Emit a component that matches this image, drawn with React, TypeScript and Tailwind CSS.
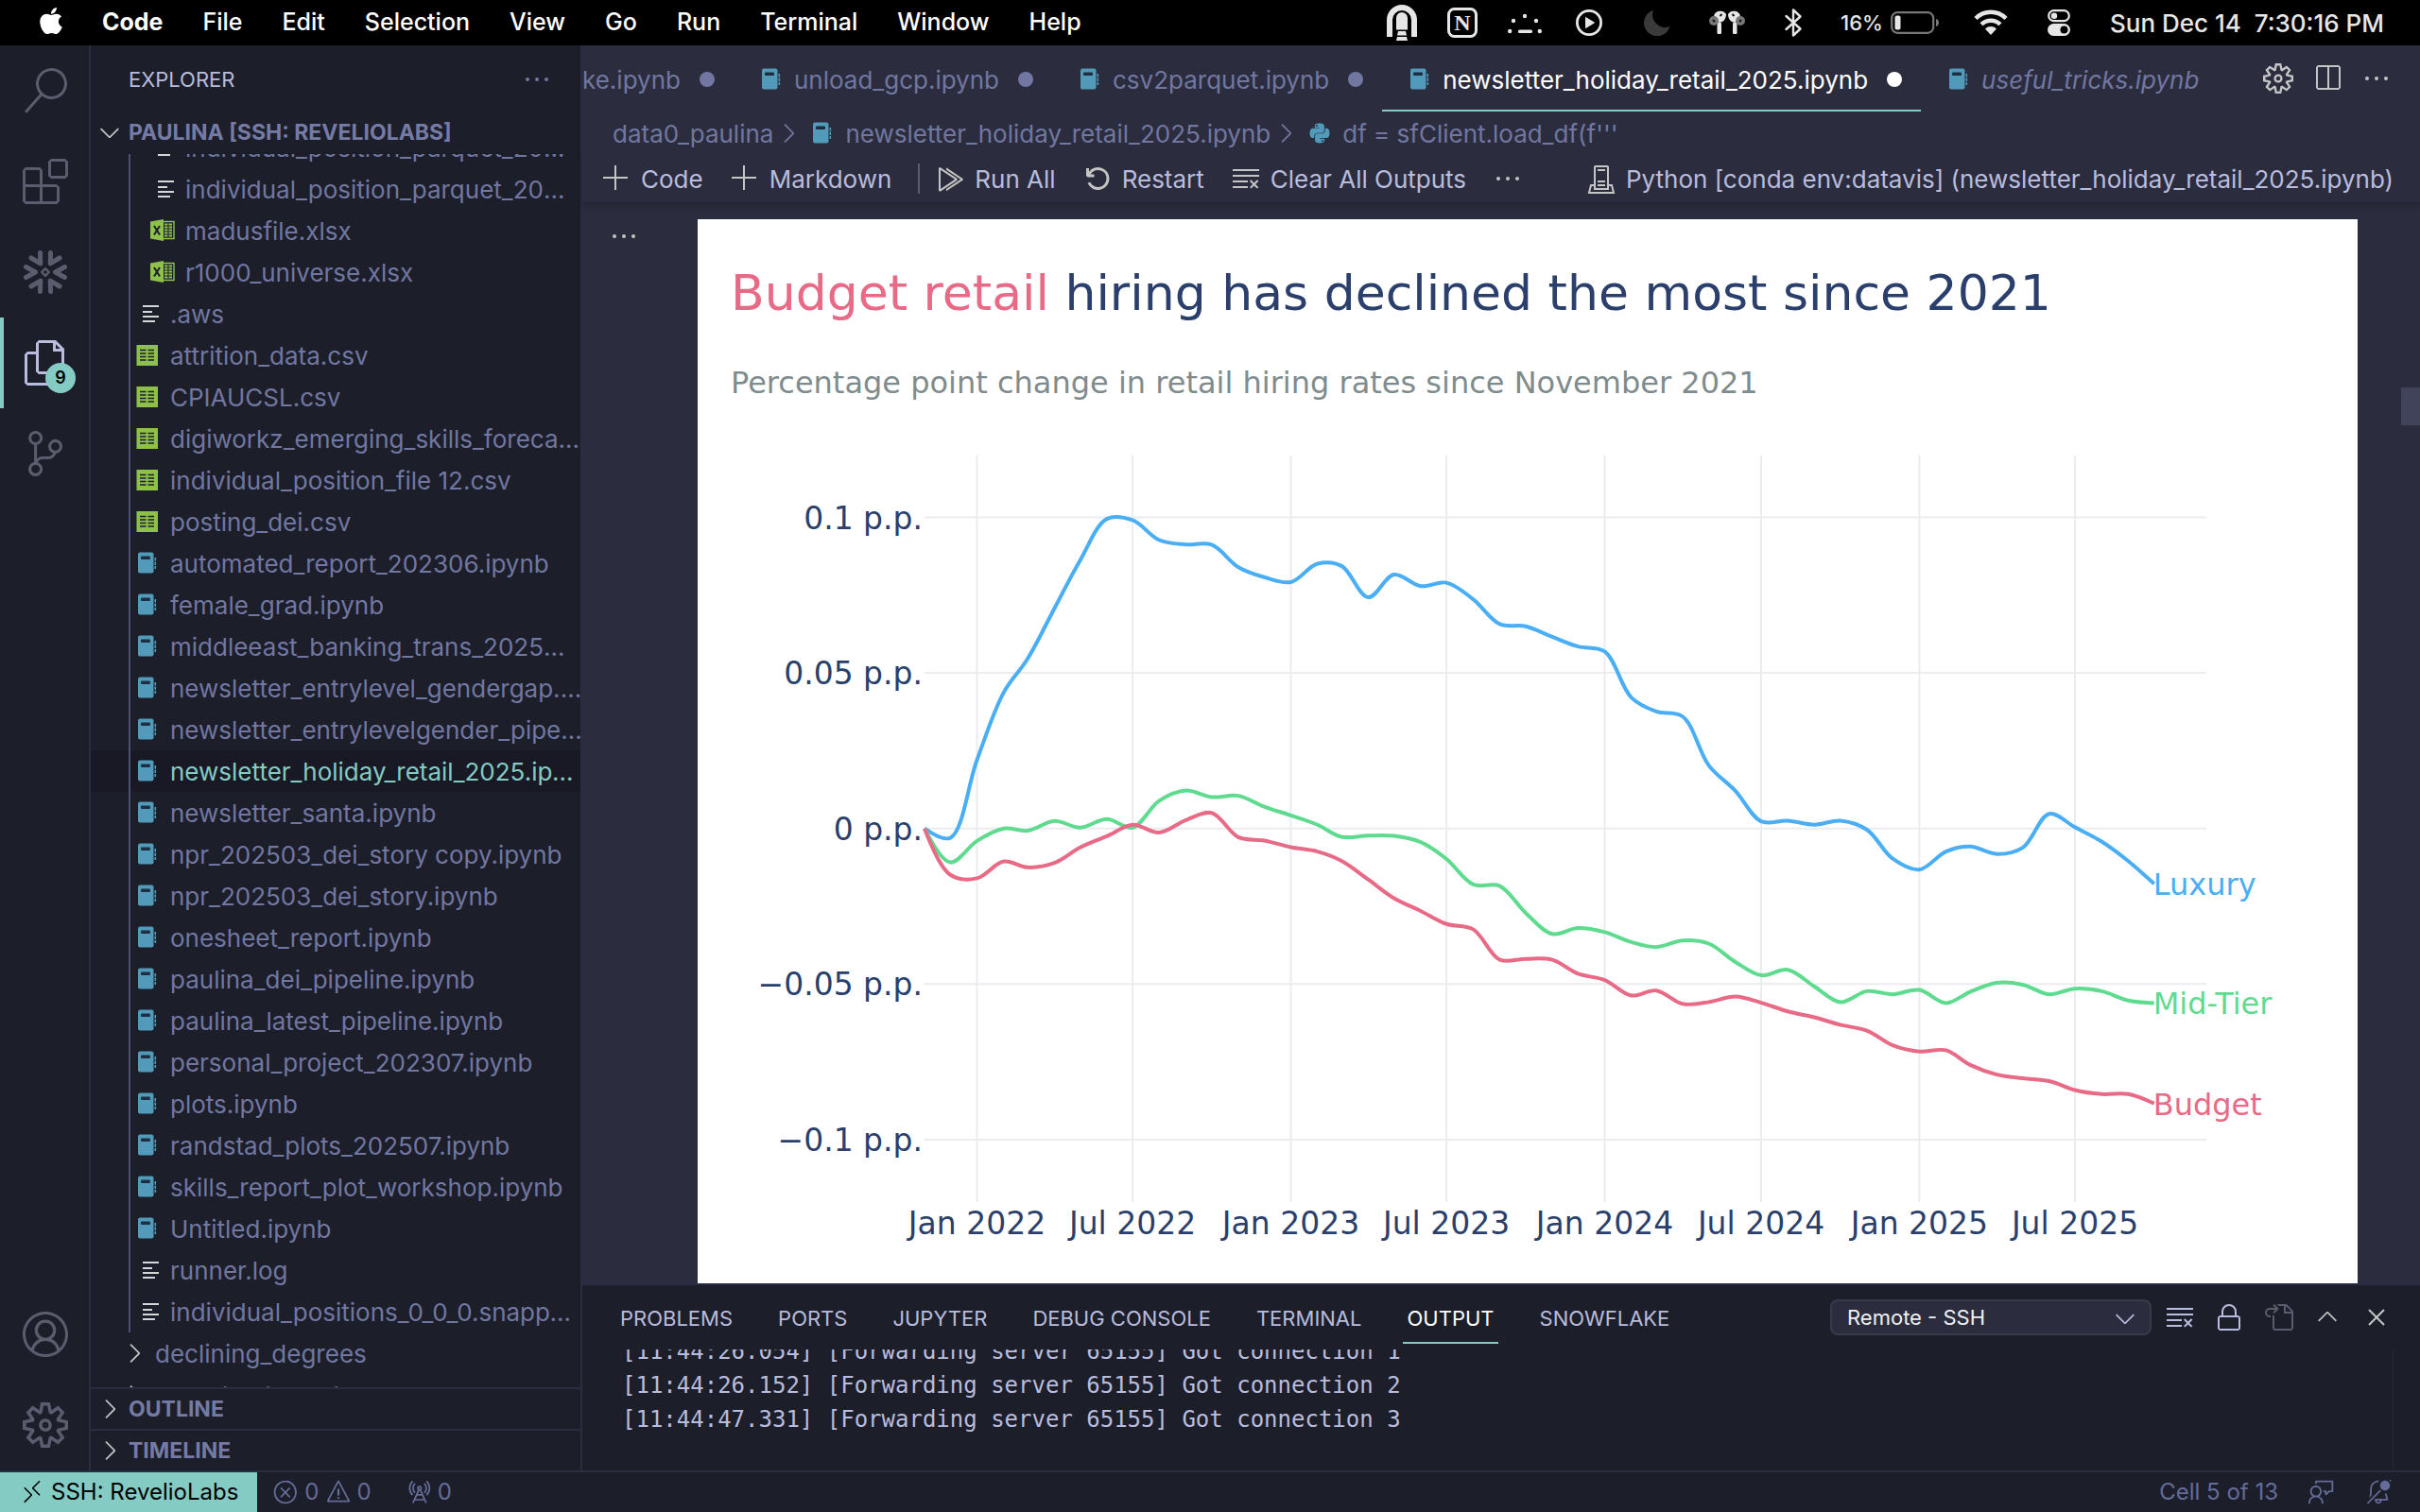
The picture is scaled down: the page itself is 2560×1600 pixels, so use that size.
import { Fragment, useState } from "react";
import type { ReactNode } from "react";
import { FaApple, FaPython } from "react-icons/fa";
import {
  VscAccount,
  VscAdd,
  VscBellSlashDot,
  VscChevronDown,
  VscChevronRight,
  VscChevronUp,
  VscClearAll,
  VscClose,
  VscDebugRestart,
  VscEllipsis,
  VscError,
  VscExtensions,
  VscFeedback,
  VscFiles,
  VscGoToFile,
  VscLock,
  VscRadioTower,
  VscRemote,
  VscRunAll,
  VscSearch,
  VscServerEnvironment,
  VscSettingsGear,
  VscSourceControl,
  VscSplitHorizontal,
  VscWarning,
} from "react-icons/vsc";

type FileKind = "text" | "excel" | "csv" | "notebook";

interface FileEntry {
  name: string;
  kind: FileKind;
  nested?: boolean;
}

const files: FileEntry[] = [
  { name: "individual_position_parquet_20m_a.parquet", kind: "text", nested: true },
  { name: "individual_position_parquet_20m_b.parquet", kind: "text", nested: true },
  { name: "madusfile.xlsx", kind: "excel", nested: true },
  { name: "r1000_universe.xlsx", kind: "excel", nested: true },
  { name: ".aws", kind: "text" },
  { name: "attrition_data.csv", kind: "csv" },
  { name: "CPIAUCSL.csv", kind: "csv" },
  { name: "digiworkz_emerging_skills_forecast.csv", kind: "csv" },
  { name: "individual_position_file 12.csv", kind: "csv" },
  { name: "posting_dei.csv", kind: "csv" },
  { name: "automated_report_202306.ipynb", kind: "notebook" },
  { name: "female_grad.ipynb", kind: "notebook" },
  { name: "middleeast_banking_trans_2025mar.ipynb", kind: "notebook" },
  { name: "newsletter_entrylevel_gendergap.ipynb", kind: "notebook" },
  { name: "newsletter_entrylevelgender_pipeline.ipynb", kind: "notebook" },
  { name: "newsletter_holiday_retail_2025.ipynb", kind: "notebook" },
  { name: "newsletter_santa.ipynb", kind: "notebook" },
  { name: "npr_202503_dei_story copy.ipynb", kind: "notebook" },
  { name: "npr_202503_dei_story.ipynb", kind: "notebook" },
  { name: "onesheet_report.ipynb", kind: "notebook" },
  { name: "paulina_dei_pipeline.ipynb", kind: "notebook" },
  { name: "paulina_latest_pipeline.ipynb", kind: "notebook" },
  { name: "personal_project_202307.ipynb", kind: "notebook" },
  { name: "plots.ipynb", kind: "notebook" },
  { name: "randstad_plots_202507.ipynb", kind: "notebook" },
  { name: "skills_report_plot_workshop.ipynb", kind: "notebook" },
  { name: "Untitled.ipynb", kind: "notebook" },
  { name: "runner.log", kind: "text" },
  { name: "individual_positions_0_0_0.snappy.parquet", kind: "text" },
];

const activeFile = "newsletter_holiday_retail_2025.ipynb";

const FileIcon = ({ kind }: { kind: FileKind }) => {
  if (kind === "text") {
    return (
      <svg className="h-10 w-10 shrink-0" viewBox="0 0 40 40" fill="#d4d7d6">
        <rect x="15" y="11" width="17" height="2" />
        <rect x="15" y="17" width="10" height="2" />
        <rect x="15" y="22" width="17" height="2" />
        <rect x="15" y="27" width="13" height="2" />
      </svg>
    );
  }
  if (kind === "excel") {
    return (
      <svg className="h-10 w-10 shrink-0" viewBox="0 0 40 40">
        <path d="M7 10.5 21 8v23L7 28.5z" fill="#8dc149" />
        <path d="M21 10.5h11v18H21" fill="none" stroke="#8dc149" strokeWidth="1.4" />
        <path
          d="M22 13.5h8M22 16.5h8M22 19.5h8M22 22.5h8M22 25.5h8"
          stroke="#8dc149"
          strokeWidth="2"
        />
        <path d="M26 12v15" stroke="#1c1e2a" strokeWidth="1" />
        <path d="m11 15 6 9.5M17 15l-6 9.5" stroke="#1c1e2a" strokeWidth="2" />
      </svg>
    );
  }
  if (kind === "csv") {
    return (
      <svg className="h-10 w-10 shrink-0" viewBox="0 0 40 40">
        <rect x="8.500" y="9" width="22.500" height="22" fill="#8dc149" />
        <path
          d="M12 14.500h6.500M12 18h6.500M12 21.500h6.500M12 25h6.500M20.500 14.500H27M20.500 18H27M20.500 21.500H27M20.500 25H27"
          stroke="#1c1e2a"
          strokeWidth="1.500"
        />
      </svg>
    );
  }
  return (
    <svg className="h-10 w-10 shrink-0" viewBox="0 0 40 40">
      <rect x="10" y="8.500" width="16.500" height="22" rx="2" fill="#519aba" />
      <rect x="13" y="12.500" width="10" height="3.500" rx="1" fill="#1f2f3f" />
      <path d="M28.300 14v3.500M28.300 18.500V22M28.300 23v3" stroke="#519aba" strokeWidth="1.600" />
    </svg>
  );
};

const SnowflakeIcon = () => (
  <svg
    className="h-12 w-12"
    viewBox="0 0 48 48"
    fill="none"
    stroke="currentColor"
    strokeLinecap="round"
    strokeLinejoin="round"
  >
    {[0, 60, 120, 180, 240, 300].map((angle) => (
      <path
        key={angle}
        d="M44.500 18.500 34.500 24l10 5.500"
        strokeWidth="5"
        transform={`rotate(${angle} 24 24)`}
      />
    ))}
    <path d="m24 20.200 3.800 3.800-3.800 3.800-3.800-3.800z" strokeWidth="2.400" />
  </svg>
);

const menus = ["File", "Edit", "Selection", "View", "Go", "Run", "Terminal", "Window", "Help"];

const StatusIcons = () => (
  <div className="flex items-center gap-8 text-[#e6e6e6]">
    <svg className="h-10 w-8" viewBox="0 0 32 40" fill="currentColor">
      <path d="M0 35V17a16 16 0 0 1 32 0v18h-6V17a10 10 0 0 0-20 0v18z" />
      <path d="M10 27.500V15a6 6 0 0 1 12 0v12.500zM12 29h8l1 4.500H11zM11 35h10l1 4H10z" />
    </svg>
    <svg className="h-8 w-8" viewBox="0 0 32 32" fill="none">
      <rect x="1.500" y="1.500" width="29" height="29" rx="6" stroke="currentColor" strokeWidth="3" />
      <text
        x="16"
        y="24"
        textAnchor="middle"
        fill="currentColor"
        className="font-['Liberation_Serif',serif] text-[24px] font-bold"
      >
        N
      </text>
    </svg>
    <svg className="h-10 w-9" viewBox="0 0 36 40" fill="currentColor">
      <circle cx="18" cy="13" r="2.200" />
      <circle cx="6" cy="18" r="2.200" />
      <circle cx="30" cy="18" r="2.200" />
      <circle cx="2.200" cy="29" r="2.200" />
      <circle cx="33.800" cy="29" r="2.200" />
      <rect x="11" y="27.500" width="15" height="3.500" rx="1.500" />
    </svg>
    <svg className="mx-1 h-7 w-7" viewBox="0 0 28 28" fill="none">
      <circle cx="14" cy="14" r="12.600" stroke="currentColor" strokeWidth="2.800" />
      <path d="M10.500 8.500v11l9-5.500z" fill="currentColor" stroke="currentColor" />
    </svg>
    <svg className="mx-2 h-7 w-7 text-[#3a3a3a]" viewBox="0 0 28 28" fill="currentColor">
      <path d="M10 .800A14 14 0 1 0 27.500 18 13.500 13.500 0 0 1 10 .800z" />
    </svg>
    <svg className="mr-1 h-7 w-10" viewBox="0 0 40 28">
      <g fill="#e6e6e6">
        <path d="M6 7a7 6.500 0 0 1 13-2c0 5-3 9-8 9z" />
        <path d="M34 7a7 6.500 0 0 0-13-2c0 5 3 9 8 9z" />
        <rect x="9.500" y="14" width="4.500" height="12" rx="1" />
        <rect x="26" y="14" width="4.500" height="12" rx="1" />
      </g>
      <circle cx="6" cy="12" r="5" fill="#777" />
      <circle cx="34" cy="12" r="5" fill="#777" />
      <path d="m14.500 5-2 2M25.500 5l2 2M5 11l2 2M35 11l-2 2" stroke="#111" strokeWidth="2" />
    </svg>
    <svg
      className="mr-2 ml-1 h-8 w-5"
      viewBox="0 0 20 32"
      fill="none"
      stroke="currentColor"
      strokeWidth="2.400"
      strokeLinejoin="round"
      strokeLinecap="round"
    >
      <path d="m2.500 9 15 13.500L10 29.500v-27l7.500 7L2.500 23" />
    </svg>
    <div className="flex items-center gap-2">
      <span className="text-[22px]">16%</span>
      <svg className="h-6 w-13" viewBox="0 0 52 24" fill="none">
        <rect x="1.200" y="1.200" width="44" height="21.600" rx="6" stroke="#777" strokeWidth="2.200" />
        <rect x="4.500" y="4.500" width="6" height="15" rx="2" fill="#e6e6e6" />
        <path d="M48 8c4 1 4 7 0 8z" fill="#777" />
      </svg>
    </div>
    <svg className="ml-1 h-7 w-9" viewBox="0 0 36 28" fill="none" stroke="currentColor" strokeWidth="4.400">
      <path d="M2 9.500a22.500 22.500 0 0 1 32 0M8 15.800a14.200 14.200 0 0 1 20 0" />
      <path d="m18 27-6-6.500a8.500 8.500 0 0 1 12 0z" fill="currentColor" stroke="none" />
    </svg>
    <svg className="ml-2 h-7 w-7" viewBox="0 0 28 28" fill="none">
      <rect x="3.200" y="1.200" width="21.600" height="11" rx="5.500" stroke="currentColor" strokeWidth="2.200" />
      <circle cx="9" cy="6.700" r="3.200" fill="currentColor" />
      <rect x="2" y="15" width="24" height="13" rx="6.500" fill="currentColor" />
      <circle cx="19.500" cy="21.500" r="4" fill="#000" />
    </svg>
  </div>
);

const MenuBar = () => (
  <header className="flex h-12 shrink-0 items-center bg-black pr-[38px] pl-10 text-[25px] font-medium text-white">
    <FaApple className="mb-1 h-8 w-7" />
    <nav className="ml-10 flex items-center gap-[42px]">
      <button className="font-bold">Code</button>
      {menus.map((menu) => (
        <button key={menu}>{menu}</button>
      ))}
    </nav>
    <div className="ml-auto flex items-center gap-10">
      <StatusIcons />
      <span className="text-[26px] whitespace-pre text-[#e6e6e6]">Sun Dec 14  7:30:16 PM</span>
    </div>
  </header>
);

const ActivityButton = ({
  label,
  active,
  children,
}: {
  label: string;
  active?: boolean;
  children: ReactNode;
}) => (
  <button
    aria-label={label}
    className={`relative flex h-24 w-full items-center justify-center border-l-4 pr-[2px] text-5xl ${
      active ? "border-[#84cbc4] text-[#b9bcdc]" : "border-transparent text-[#5b5d6e]"
    }`}
  >
    {children}
  </button>
);

const ActivityBar = () => (
  <aside className="flex w-24 shrink-0 flex-col justify-between border-r-2 border-[#2a2d41]">
    <div>
      <ActivityButton label="Search">
        <VscSearch />
      </ActivityButton>
      <ActivityButton label="Extensions">
        <VscExtensions />
      </ActivityButton>
      <ActivityButton label="Snowflake">
        <SnowflakeIcon />
      </ActivityButton>
      <ActivityButton label="Explorer" active>
        <VscFiles />
        <span className="absolute right-[14px] bottom-4 flex h-8 w-8 items-center justify-center rounded-full bg-[#84cbc4] text-[18px] font-semibold text-black">
          9
        </span>
      </ActivityButton>
      <ActivityButton label="Source Control">
        <VscSourceControl />
      </ActivityButton>
    </div>
    <div>
      <ActivityButton label="Accounts">
        <VscAccount />
      </ActivityButton>
      <ActivityButton label="Manage">
        <VscSettingsGear />
      </ActivityButton>
    </div>
  </aside>
);

const FolderRow = ({ name }: { name: string }) => (
  <li>
    <button className="flex h-11 w-full items-center pl-[30px]">
      <VscChevronRight className="mr-[6px] h-8 w-8 text-[#c5c5c5]" />
      {name}
    </button>
  </li>
);

const CollapsedSection = ({ title }: { title: string }) => (
  <button className="flex h-11 shrink-0 items-center border-t-2 border-[#2a2d41] pl-1 text-[23px] font-bold text-[#757ba5]">
    <VscChevronRight className="mr-1 h-8 w-8 text-[#c5c5c5]" />
    {title}
  </button>
);

const Sidebar = () => (
  <aside className="flex w-[520px] shrink-0 flex-col border-r-2 border-[#2a2d41] text-[#7177a0]">
    <div className="flex h-[70px] shrink-0 items-center justify-between pt-[2px] pr-[30px] pl-10 text-[22px] text-[#b9bcdc]">
      <h2>EXPLORER</h2>
      <button aria-label="Views and More Actions">
        <VscEllipsis className="h-8 w-8 text-[#7177a0]" />
      </button>
    </div>
    <button className="flex h-11 shrink-0 items-center pl-1 text-[23px] font-bold text-[#757ba5]">
      <VscChevronDown className="mr-1 h-8 w-8 text-[#c5c5c5]" />
      PAULINA [SSH: REVELIOLABS]
    </button>
    <div className="min-h-0 flex-1 overflow-hidden border-t border-[#191b26]">
      <ul className="-mt-[29px] text-[26px]">
        {files.map((file) => (
          <li key={file.name} className={file.name === activeFile ? "bg-[#181924] text-[#84cbc4]" : ""}>
            <div className="ml-10 border-l-2 border-[#4a4f74]">
              <button
                className={`-ml-[2px] flex h-11 w-[calc(100%+4px)] items-center text-left ${
                  file.nested ? "pl-4" : ""
                }`}
              >
                <FileIcon kind={file.kind} />
                <span className="ml-1 truncate">{file.name}</span>
              </button>
            </div>
          </li>
        ))}
        <FolderRow name="declining_degrees" />
        <FolderRow name="exec_backups_hr" />
      </ul>
    </div>
    <CollapsedSection title="OUTLINE" />
    <CollapsedSection title="TIMELINE" />
  </aside>
);

interface TabProps {
  name: string;
  state?: "dirty" | "active" | "preview";
}

const EditorTab = ({ name, state = "dirty" }: TabProps) => (
  <button
    className={`flex h-full shrink-0 items-center border-b-2 pt-1 pl-5 ${
      state === "active" ? "border-[#84cbc4] text-white" : "border-transparent"
    } ${state === "preview" ? "italic" : ""}`}
  >
    <FileIcon kind="notebook" />
    <span className="ml-1">{name}</span>
    <span className="flex w-14 justify-center">
      {state !== "preview" && <span className="h-4 w-4 rounded-full bg-current" />}
    </span>
  </button>
);

const EditorTabs = () => (
  <div className="flex h-[70px] items-center justify-between">
    <div className="flex h-full min-w-0 overflow-hidden text-[26px] text-[#7177a0]">
      <button className="flex items-center pt-[2px]">
        ke.ipynb
        <span className="flex w-14 justify-center">
          <span className="h-4 w-4 rounded-full bg-current" />
        </span>
      </button>
      <EditorTab name="unload_gcp.ipynb" />
      <EditorTab name="csv2parquet.ipynb" />
      <EditorTab name="newsletter_holiday_retail_2025.ipynb" state="active" />
      <EditorTab name="useful_tricks.ipynb" state="preview" />
    </div>
    <div className="flex shrink-0 gap-5 pr-[30px] text-[32px] text-[#c5c5c5]">
      <button aria-label="Customize Notebook Layout">
        <VscSettingsGear />
      </button>
      <button aria-label="Split Editor">
        <VscSplitHorizontal />
      </button>
      <button aria-label="More Actions">
        <VscEllipsis />
      </button>
    </div>
  </div>
);

const Breadcrumbs = () => (
  <nav className="flex h-11 items-center pt-[2px] pl-8 text-[26px] text-[#7177a0]">
    <a href="#data0">data0_paulina</a>
    <VscChevronRight className="h-8 w-8" />
    <FileIcon kind="notebook" />
    <a href="#notebook" className="ml-1">
      newsletter_holiday_retail_2025.ipynb
    </a>
    <VscChevronRight className="h-8 w-8" />
    <FaPython className="mx-2 h-6 w-6 text-[#519aba]" />
    <a href="#cell" className="ml-1">
      df = sfClient.load_df(f'''
    </a>
  </nav>
);

const ToolbarButton = ({ icon, label }: { icon: ReactNode; label: string }) => (
  <button className="flex items-center gap-[10px]">
    <span className="text-[32px] text-[#c5c5c5]">{icon}</span>
    {label}
  </button>
);

const NotebookToolbar = () => (
  <div className="flex h-[52px] items-center justify-between pt-[2px] pr-7 pl-5 text-[26px] text-[#b9bcdc] shadow-[0_4px_6px_rgba(0,0,0,0.2)]">
    <div className="flex items-center gap-7">
      <ToolbarButton icon={<VscAdd />} label="Code" />
      <ToolbarButton icon={<VscAdd />} label="Markdown" />
      <span className="-mr-3 h-8 w-[2px] bg-[#5b5d6e]" />
      <ToolbarButton icon={<VscRunAll />} label="Run All" />
      <ToolbarButton icon={<VscDebugRestart />} label="Restart" />
      <ToolbarButton icon={<VscClearAll />} label="Clear All Outputs" />
      <button aria-label="More" className="text-[32px] text-[#c5c5c5]">
        <VscEllipsis />
      </button>
    </div>
    <ToolbarButton
      icon={<VscServerEnvironment />}
      label="Python [conda env:datavis] (newsletter_holiday_retail_2025.ipynb)"
    />
  </div>
);

// Change since November 2021, in thousandths of a percentage point, one value a month
const series = [
  {
    name: "Luxury",
    color: "#4aaef5",
    values: [
      0, -3, 22, 43.7, 54.6, 70.7, 86.2, 99.5, 99.1, 92.7, 91.3, 91.2, 84, 80.8, 79.2, 85.1, 84.4,
      74.3, 81.6, 77.9, 79, 73.7, 65.7, 65, 61.6, 58.5, 56.9, 42.1, 37.6, 35.9, 20.3, 12.1, 2.3,
      2.5, 1.2, 2.5, -0.4, -9.7, -13.2, -7.4, -5.8, -8.2, -6.2, 4.7, 0.4, -4.2, -10.5, -17.8,
    ],
  },
  {
    name: "Mid-Tier",
    color: "#5fdb90",
    values: [
      0, -10.9, -4, 0, -0.7, 2.4, 0.3, 3, 0.3, 8.9, 12.2, 10.1, 10.5, 7, 4.2, 1.2, -2.7, -2.3,
      -2.4, -4.4, -9.8, -18, -18.5, -27.1, -33.9, -32, -33.3, -36.5, -38.1, -36, -37, -42.9,
      -47.2, -45.4, -50.8, -55.8, -52.3, -53.3, -51.9, -56.1, -52.5, -49.6, -50.2, -53.3, -51.5,
      -52.3, -55.3, -56.1,
    ],
  },
  {
    name: "Budget",
    color: "#e86a86",
    values: [
      0, -14.9, -16, -10.6, -12.5, -11.1, -6.1, -2.5, 1.2, -1.3, 2.7, 5, -2.8, -3.9, -6, -7.4,
      -10.4, -16.4, -22.4, -26.5, -30.7, -32.4, -42.2, -41.9, -42.2, -46.7, -48.7, -53.7, -52.1,
      -56.4, -55.8, -54, -56, -58.8, -60.7, -63.1, -65, -69.7, -71.7, -71.3, -76, -79.1, -80.3,
      -81.2, -84.1, -85.4, -85.4, -88.4,
    ],
  },
];

const DAY = 86400000;
const start = Date.UTC(2021, 10, 1);
const xOf = (month: number) => 240 + ((Date.UTC(2021, 10 + month, 1) - start) / DAY) * 0.9096;
const yOf = (value: number) => 644.7 - value * 3.292;

const xTicks = [
  { month: 2, label: "Jan 2022" },
  { month: 8, label: "Jul 2022" },
  { month: 14, label: "Jan 2023" },
  { month: 20, label: "Jul 2023" },
  { month: 26, label: "Jan 2024" },
  { month: 32, label: "Jul 2024" },
  { month: 38, label: "Jan 2025" },
  { month: 44, label: "Jul 2025" },
];

const yTicks = [
  { value: 100, label: "0.1 p.p." },
  { value: 50, label: "0.05 p.p." },
  { value: 0, label: "0 p.p." },
  { value: -50, label: "−0.05 p.p." },
  { value: -100, label: "−0.1 p.p." },
];

type Point = [number, number];

// Centripetal Catmull-Rom control points on both sides of `cur`
const tangents = (prev: Point, cur: Point, next: Point): [Point, Point] => {
  const d1 = [prev[0] - cur[0], prev[1] - cur[1]];
  const d2 = [next[0] - cur[0], next[1] - cur[1]];
  const a1 = Math.pow(d1[0] ** 2 + d1[1] ** 2, 0.25);
  const a2 = Math.pow(d2[0] ** 2 + d2[1] ** 2, 0.25);
  const nx = a2 * a2 * d1[0] - a1 * a1 * d2[0];
  const ny = a2 * a2 * d1[1] - a1 * a1 * d2[1];
  const k1 = 3 * a2 * (a1 + a2);
  const k2 = 3 * a1 * (a1 + a2);
  return [
    [cur[0] + nx / k1, cur[1] + ny / k1],
    [cur[0] - nx / k2, cur[1] - ny / k2],
  ];
};

const splinePath = (values: number[]) => {
  const pts = values.map((v, i): Point => [xOf(i), yOf(v)]);
  const tans = pts.slice(1, -1).map((p, i) => tangents(pts[i], p, pts[i + 2]));
  let d = `M${pts[0]}Q${tans[0][0]} ${pts[1]}`;
  for (let i = 2; i < pts.length - 1; i++) {
    d += `C${tans[i - 2][1]} ${tans[i - 1][0]} ${pts[i]}`;
  }
  return `${d}Q${tans[tans.length - 1][1]} ${pts[pts.length - 1]}`;
};

const HiringChart = () => (
  <svg
    className="block w-full bg-white font-['DejaVu_Sans',sans-serif]"
    viewBox="0 0 1756 1126"
    fill="none"
  >
    <text x="35" y="96" className="text-[52px]" fill="#2a3f6b">
      <tspan fill="#e86a86">Budget retail</tspan> hiring has declined the most since 2021
    </text>
    <text x="35" y="184" className="text-[32px]" fill="#7f8c8d">
      Percentage point change in retail hiring rates since November 2021
    </text>
    <g stroke="#ebecf0" strokeWidth="2">
      {xTicks.map(({ month }) => (
        <path key={month} d={`M${xOf(month)} 250V1040`} />
      ))}
      {yTicks.map(({ value }) => (
        <path key={value} d={`M240 ${yOf(value)}H1596`} />
      ))}
    </g>
    <g className="text-[33px]" fill="#2a3f6b">
      {xTicks.map(({ month, label }) => (
        <text key={label} x={xOf(month)} y="1074" textAnchor="middle">
          {label}
        </text>
      ))}
      {yTicks.map(({ value, label }) => (
        <text key={label} x="238" y={yOf(value) + 12} textAnchor="end">
          {label}
        </text>
      ))}
    </g>
    {series.map(({ name, color, values }) => (
      <Fragment key={name}>
        <path d={splinePath(values)} stroke={color} strokeWidth="4" />
        <text
          x={xOf(47) - 1}
          y={yOf(values[47]) + 12}
          fill={color}
          className="text-[32px]"
        >
          {name}
        </text>
      </Fragment>
    ))}
  </svg>
);

const panelTabs = ["PROBLEMS", "PORTS", "JUPYTER", "DEBUG CONSOLE", "TERMINAL", "OUTPUT", "SNOWFLAKE"];

const logLines = [
  "[11:44:26.054] [Forwarding server 65155] Got connection 1",
  "[11:44:26.152] [Forwarding server 65155] Got connection 2",
  "[11:44:47.331] [Forwarding server 65155] Got connection 3",
];

const Panel = () => {
  const [tab, setTab] = useState("OUTPUT");
  return (
    <section className="relative flex h-[198px] shrink-0 flex-col border-t-2 border-[#2a2d41] bg-[#1c1e2a]">
      <div className="flex h-[68px] shrink-0 items-center justify-between pr-[30px] pl-9 text-[#b9bcdc]">
        <div className="flex gap-10 text-[22px]">
          {panelTabs.map((name) => (
            <button
              key={name}
              onClick={() => setTab(name)}
              className={`mt-1 border-b-2 px-1 py-2 ${
                name === tab ? "border-[#84cbc4] text-white" : "border-transparent"
              }`}
            >
              {name}
            </button>
          ))}
        </div>
        <div className="flex items-center gap-5 text-[32px]">
          <div className="relative mr-[-6px] flex">
            <select
              aria-label="Output channel"
              className="h-[38px] w-[340px] appearance-none rounded-lg border-2 border-[#383a4c] bg-[#2b2d3e] pl-4 text-[22px] text-[#f0f0f0]"
            >
              <option>Remote - SSH</option>
            </select>
            <VscChevronDown className="pointer-events-none absolute top-1 right-3" />
          </div>
          <button aria-label="Clear Output">
            <VscClearAll />
          </button>
          <button aria-label="Turn Auto Scrolling Off">
            <VscLock />
          </button>
          <button aria-label="Open Output in Editor" className="text-[#5b5d6e]">
            <VscGoToFile />
          </button>
          <button aria-label="Maximize Panel" className="text-[#c5c5c5]">
            <VscChevronUp />
          </button>
          <button aria-label="Close Panel" className="text-[#c5c5c5]">
            <VscClose />
          </button>
        </div>
      </div>
      <div className="mr-7 min-h-0 flex-1 overflow-hidden border-r border-[#262837] pl-[42px]">
        <pre className="-mt-4 font-['DejaVu_Sans_Mono',monospace] text-2xl leading-9 text-[#b9bcdc]">
          {logLines.join("\n")}
        </pre>
      </div>
    </section>
  );
};

const StatusBar = () => (
  <footer className="flex h-11 shrink-0 items-center justify-between border-t-2 border-[#2a2d41] pr-[30px] text-2xl text-[#666c99]">
    <div className="flex h-full items-center">
      <button className="flex h-full items-center gap-[6px] bg-[#84cbc4] px-5 text-black">
        <VscRemote className="h-7 w-7" />
        SSH: RevelioLabs
      </button>
      <button className="ml-4 flex items-center gap-[6px]">
        <VscError className="h-7 w-7" />0
        <VscWarning className="h-7 w-7" />0
      </button>
      <button className="ml-9 flex items-center gap-[6px]">
        <VscRadioTower className="h-7 w-7" />0
      </button>
    </div>
    <div className="flex items-center gap-8">
      <button>Cell 5 of 13</button>
      <button aria-label="Tweet Feedback">
        <VscFeedback className="h-7 w-7" />
      </button>
      <button aria-label="Notifications">
        <VscBellSlashDot className="h-7 w-7" />
      </button>
    </div>
  </footer>
);

const App = () => (
  <div className="flex h-screen flex-col overflow-hidden bg-[#1c1e2a] font-['Inter','Liberation_Sans',sans-serif]">
    <MenuBar />
    <div className="flex min-h-0 flex-1">
      <ActivityBar />
      <Sidebar />
      <div className="flex min-w-0 flex-1 flex-col">
        <main className="flex min-h-0 flex-1 flex-col bg-[#2b2d3e]">
          <EditorTabs />
          <Breadcrumbs />
          <NotebookToolbar />
          <div className="flex min-h-0 flex-1 overflow-hidden pt-[18px]">
            <button aria-label="Cell output actions" className="mx-7 h-9 text-[32px] text-[#c5c5c5]">
              <VscEllipsis />
            </button>
            <div className="ml-[34px] min-w-0 flex-1">
              <HiringChart />
            </div>
            <div className="ml-[46px] w-5 pt-[178px]">
              <div className="h-10 bg-[#41435a]" />
            </div>
          </div>
        </main>
        <Panel />
      </div>
    </div>
    <StatusBar />
  </div>
);

export default App;
